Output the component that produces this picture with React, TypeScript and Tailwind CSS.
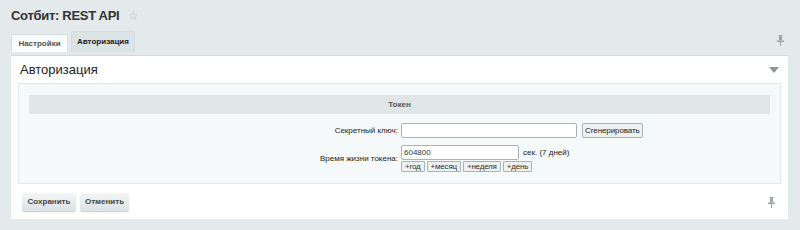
import React from "react";

const Pin = ({ className = "" }: { className?: string }) => (
  <svg width="7" height="11" viewBox="0 0 7 11" className={className}>
    <rect x="1.5" y="0" width="4" height="1.5" fill="#9aa3a6" />
    <rect x="2" y="1.5" width="3" height="4" fill="#9aa3a6" />
    <rect x="0" y="5.5" width="7" height="1.5" fill="#9aa3a6" />
    <rect x="3" y="7" width="1" height="4" fill="#9aa3a6" />
  </svg>
);

export default function App() {
  return (
    <div
      className="w-[800px] h-[230px] bg-[#e4eaec] overflow-hidden text-[#333]"
      style={{ fontFamily: '"Liberation Sans", Arial, sans-serif' }}
    >
      <div className="flex items-center h-[31px] pl-[11px] pt-[1px]">
        <span className="text-[13px] font-bold text-[#333] tracking-[-0.3px]">Сотбит: REST API</span>
        <span className="ml-[9px] text-[12px] text-[#b4bcbf] leading-none">☆</span>
      </div>
      <div className="flex items-end ml-[11px] mr-[12px] h-[21px]">
        <div className="h-[18px] w-[57px] bg-gradient-to-b from-[#f7f9f9] to-[#ffffff] border border-b-0 border-[#d7dfe1] rounded-t-[2px] flex items-center justify-center text-[8px] font-bold text-[#555]">
          Настройки
        </div>
        <div className="ml-[3px] h-[21px] w-[64px] bg-[#dbe3e5] border border-b-0 border-[#d3dbde] rounded-t-[2px] flex items-center justify-center text-[8px] font-bold text-[#222]">
          Авторизация
        </div>
        <div className="flex-1" />
        <Pin className="mb-[6px] mr-[4px]" />
      </div>
      <div className="ml-[11px] mt-[3px] w-[777px] h-[164px] bg-white border-t border-[#d2d9dc] flex flex-col">
        <div className="flex items-center justify-between h-[27px] pl-[9px] pr-[9px] pt-[1px]">
          <span className="text-[13px] text-[#222]">Авторизация</span>
          <svg width="10" height="6" viewBox="0 0 10 6">
            <path d="M0 0 L10 0 L5 6 Z" fill="#8e979a" />
          </svg>
        </div>
        <div className="mx-[7px] h-[101px] bg-[#f5f9f9] border border-[#e3e9ea] pt-[11px] px-[10px]">
          <div className="h-[19px] bg-[#e0e6e8] flex items-center justify-center text-[8px] font-bold text-[#555]">
            Токен
          </div>
          <div className="mt-[9px] flex items-center h-[15px]">
            <div className="w-[372px] text-right pr-[3px] text-[8px] text-[#222]">Секретный ключ:</div>
            <div className="w-[176px] h-[15px] bg-white border border-[#a9b3b6] rounded-[2px]" />
            <div className="ml-[5px] h-[15px] px-[2px] bg-[#eef1f1] border border-[#a9b3b6] rounded-[2px] flex items-center text-[8px] text-[#222] tracking-[-0.1px]">
              Сгенерировать
            </div>
          </div>
          <div className="mt-[7px] flex items-center">
            <div className="w-[372px] text-right pr-[3px] text-[8px] text-[#222]">Время жизни токена:</div>
            <div className="flex flex-col">
              <div className="flex items-center">
                <div className="w-[118px] h-[15px] bg-white border border-[#a9b3b6] rounded-[2px] flex items-center pl-[2px] text-[8px] text-[#333]">
                  604800
                </div>
                <span className="ml-[4px] text-[8px] text-[#222]">сек. (7 дней)</span>
              </div>
              <div className="flex gap-[2px] mt-[1px]">
                {["+год", "+месяц", "+неделя", "+день"].map((t) => (
                  <div
                    key={t}
                    className="h-[11px] px-[3px] bg-[#eef1f1] border border-[#a9b3b6] rounded-[1px] flex items-center text-[8px] text-[#333] tracking-[-0.2px]"
                  >
                    {t}
                  </div>
                ))}
              </div>
            </div>
          </div>
        </div>
        <div className="flex items-center justify-between pl-[11px] pr-[13px] mt-[9px]">
          <div className="flex gap-[4px]">
            <div className="h-[18px] w-[54px] rounded-[2px] bg-gradient-to-b from-[#f3f6f6] to-[#dce3e5] shadow-[0_1px_1px_rgba(0,0,0,0.2)] flex items-center justify-center text-[8px] font-bold text-[#444]">
              Сохранить
            </div>
            <div className="h-[18px] w-[49px] rounded-[2px] bg-gradient-to-b from-[#f3f6f6] to-[#dce3e5] shadow-[0_1px_1px_rgba(0,0,0,0.2)] flex items-center justify-center text-[8px] font-bold text-[#444]">
              Отменить
            </div>
          </div>
          <Pin />
        </div>
      </div>
    </div>
  );
}
